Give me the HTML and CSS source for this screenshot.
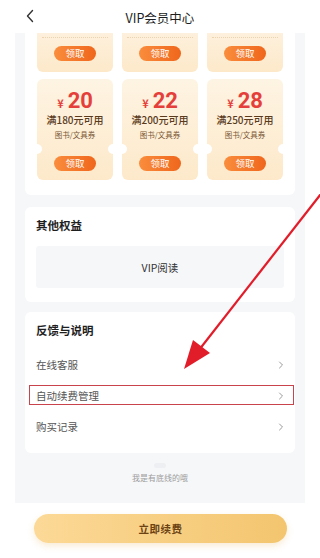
FILE: index.html
```html
<!DOCTYPE html>
<html lang="zh-CN">
<head>
<meta charset="utf-8">
<meta name="viewport" content="width=320">
<link rel="stylesheet" href="styles.css">
</head>
<body>
<div class="page">
  <header class="topbar">
    <svg class="back" width="10" height="14" viewBox="0 0 10 14"><path d="M7.5 1.5 L2.5 7 L7.5 12.5" fill="none" stroke="#333" stroke-width="1.4" stroke-linecap="round" stroke-linejoin="round"/></svg>
    <div class="title">VIP会员中心</div>
  </header>

  <main class="panel">
    <section class="card coupons">
      <div class="stub"><span class="get">领取</span></div>
      <div class="stub"><span class="get">领取</span></div>
      <div class="stub"><span class="get">领取</span></div>

      <div class="coupon">
        <div class="amount"><span class="yen">¥</span><span class="num">20</span></div>
        <div class="cond">满180元可用</div>
        <div class="kind">图书/文具券</div>
        <span class="get">领取</span>
      </div>
      <div class="coupon">
        <div class="amount"><span class="yen">¥</span><span class="num">22</span></div>
        <div class="cond">满200元可用</div>
        <div class="kind">图书/文具券</div>
        <span class="get">领取</span>
      </div>
      <div class="coupon">
        <div class="amount"><span class="yen">¥</span><span class="num">28</span></div>
        <div class="cond">满250元可用</div>
        <div class="kind">图书/文具券</div>
        <span class="get">领取</span>
      </div>
    </section>

    <section class="card">
      <h2 class="card-title">其他权益</h2>
      <div class="benefit">VIP阅读</div>
    </section>

    <section class="card list-card">
      <h2 class="card-title">反馈与说明</h2>
      <div class="row"><span>在线客服</span><svg class="chev" width="6" height="8" viewBox="0 0 6 8"><path d="M1.5 1 L4.5 4 L1.5 7" fill="none" stroke="#9a9a9a" stroke-width="1" stroke-linecap="round" stroke-linejoin="round"/></svg></div>
      <div class="row marked"><span>自动续费管理</span><svg class="chev" width="6" height="8" viewBox="0 0 6 8"><path d="M1.5 1 L4.5 4 L1.5 7" fill="none" stroke="#9a9a9a" stroke-width="1" stroke-linecap="round" stroke-linejoin="round"/></svg></div>
      <div class="row"><span>购买记录</span><svg class="chev" width="6" height="8" viewBox="0 0 6 8"><path d="M1.5 1 L4.5 4 L1.5 7" fill="none" stroke="#9a9a9a" stroke-width="1" stroke-linecap="round" stroke-linejoin="round"/></svg></div>
    </section>

    <footer class="endline">
      <svg class="end-icon" width="14" height="7" viewBox="0 0 14 7"><rect x="1" y="1" width="12" height="5" rx="2.5" fill="#eeeff2"/></svg>
      <div class="end-text">我是有底线的哦</div>
    </footer>
  </main>

  <div class="action">
    <button class="renew">立即续费</button>
  </div>

  <svg class="annot" width="320" height="558" viewBox="0 0 320 558">
    <line x1="324" y1="190" x2="199" y2="350" stroke="#e11d2a" stroke-width="2.2"/>
    <polygon points="184,369 193,340 210,353" fill="#e11d2a"/>
  </svg>
</div>
</body>
</html>
```

FILE: styles.css
```css
* { box-sizing: border-box; }
html, body { margin: 0; padding: 0; }
body {
  width: 320px;
  height: 558px;
  overflow: hidden;
  background: #ffffff;
  font-family: "Noto Sans CJK SC", "Noto Sans", sans-serif;
  color: #222;
}
.page { position: relative; width: 320px; height: 558px; }

.topbar {
  height: 33px;
  display: flex;
  align-items: center;
  justify-content: center;
  position: relative;
  background: #fff;
}
.back { position: absolute; left: 25px; top: 9px; }
.title { font-size: 12.5px; color: #1d1d1d; line-height: 16px; margin-top: 3px; }

.panel {
  margin: 0 15px;
  background: #f6f7f9;
  padding: 0 10px;
  display: flex;
  flex-direction: column;
}

.card {
  background: #fff;
  border-radius: 6px;
  padding: 10px 11px 14px;
  margin-top: 12px;
}
.coupons {
  margin-top: 0;
  border-radius: 0 0 6px 6px;
  padding: 0 12px 15px;
  display: grid;
  grid-template-columns: repeat(3, 1fr);
  column-gap: 9px;
  row-gap: 7px;
}

.get {
  display: inline-block;
  width: 42px;
  height: 15px;
  line-height: 15px;
  border-radius: 8px;
  background: linear-gradient(90deg, #fa8d3d, #ef661c);
  color: #fff;
  font-size: 9.5px;
  text-align: center;
}

.stub {
  position: relative;
  height: 39px;
  border-radius: 0 0 6px 6px;
  background: linear-gradient(180deg, #fdf0dc, #fde9ca);
  display: flex;
  justify-content: center;
  padding-top: 13px;
}
.stub::before {
  content: "";
  position: absolute;
  left: 5px;
  right: 5px;
  top: 4px;
  border-top: 1px dotted #ecd4b2;
}

.coupon {
  position: relative;
  height: 101px;
  border-radius: 6px;
  background: linear-gradient(180deg, #fef4e3, #fde9ca);
  overflow: hidden;
  display: flex;
  flex-direction: column;
  align-items: center;
  padding-top: 10px;
}
.coupon::before, .coupon::after {
  content: "";
  position: absolute;
  top: 65px;
  width: 10px;
  height: 10px;
  border-radius: 50%;
  background: #fff;
}
.coupon::before { left: -5px; }
.coupon::after { right: -5px; }

.amount {
  height: 24px;
  line-height: 24px;
  color: #e53f3b;
  font-weight: 700;
  display: flex;
  align-items: baseline;
}
.yen { font-size: 11px; margin-right: 4px; }
.num { font-family: "Roboto", "Noto Sans", sans-serif; font-size: 22px; font-weight: 700; }
.cond {
  font-size: 10px;
  line-height: 14px;
  height: 14px;
  color: #5a3a1c;
  font-weight: 500;
}
.kind {
  margin-top: 3px;
  font-size: 7.5px;
  line-height: 10px;
  color: #7a5634;
}
.coupon .get { margin-top: 16px; }

.card-title {
  margin: 0;
  font-size: 11.5px;
  line-height: 16px;
  font-weight: 700;
  color: #1e1e1e;
}
.benefit {
  margin-top: 13px;
  height: 42px;
  background: #f6f7f9;
  border-radius: 3px;
  display: flex;
  align-items: center;
  justify-content: center;
  font-size: 10.5px;
  color: #333;
}

.list-card { margin-top: 10px; padding-bottom: 11px; }
.list-card .card-title { margin-bottom: 11px; }
.row {
  position: relative;
  height: 31px;
  display: flex;
  align-items: center;
  justify-content: space-between;
  font-size: 10.5px;
  color: #555;
}
.marked::after {
  content: "";
  position: absolute;
  left: -7px;
  right: -10px;
  top: 5px;
  bottom: 6px;
  border: 1.6px solid #c9434c;
  pointer-events: none;
}

.endline {
  height: 50px;
  display: flex;
  flex-direction: column;
  align-items: center;
  padding-top: 9px;
}
.end-icon { display: block; }
.end-text {
  margin-top: 3px;
  font-size: 8px;
  line-height: 11px;
  color: #9c9c9c;
}

.action {
  padding: 11px 33px 0 34px;
}
.renew {
  display: block;
  width: 100%;
  height: 29px;
  border: none;
  border-radius: 15px;
  background: linear-gradient(90deg, #fcd997, #f3c56f);
  box-shadow: 0 3px 6px rgba(230, 180, 90, 0.25);
  font-family: "Noto Sans CJK SC", sans-serif;
  font-size: 10.5px;
  font-weight: 700;
  letter-spacing: 0.5px;
  color: #6b4214;
  padding: 0;
}

.annot {
  position: absolute;
  left: 0;
  top: 0;
  pointer-events: none;
}
```
